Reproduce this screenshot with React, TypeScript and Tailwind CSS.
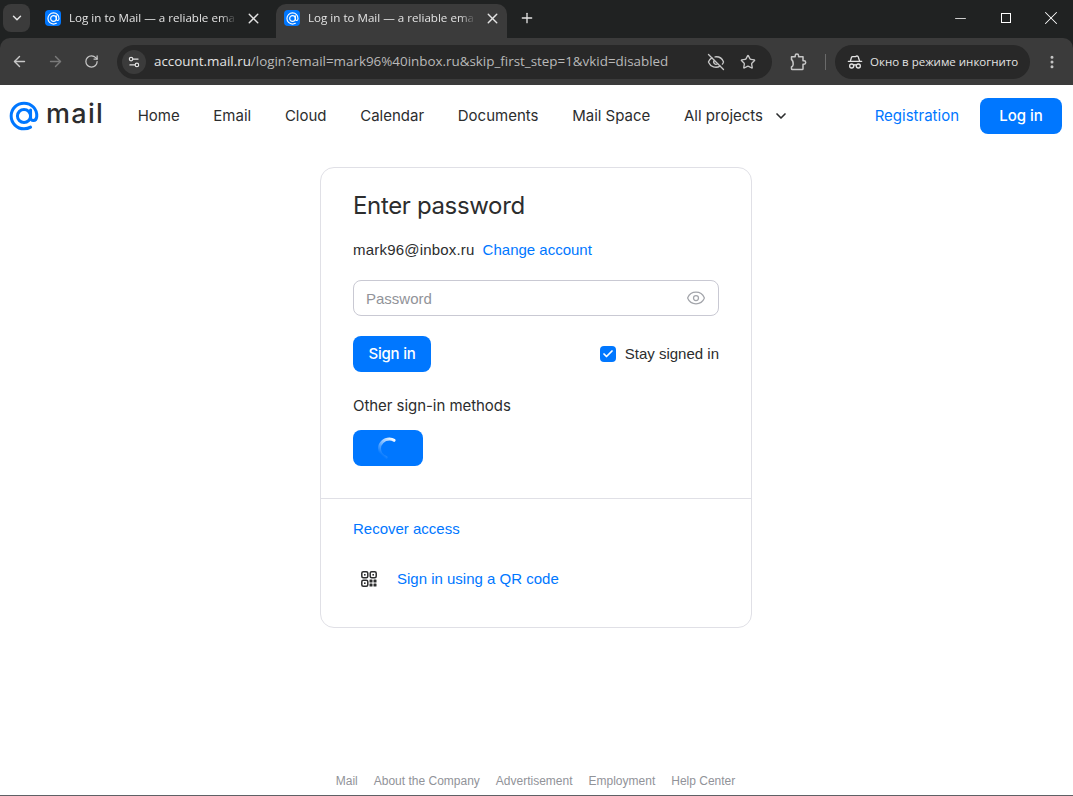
import { ArrowLeft, ArrowRight, ChevronDown, EllipsisVertical, Eye, EyeOff, Minus, Plus, RotateCw, Settings2, Star, X, Check, HatGlasses } from 'lucide-react';

function MailAt({ size, color, weight }: { size: number; color: string; weight: number }) {
    return (
        <svg width={size} height={size} viewBox="0 0 32 32" fill="none">
            <circle cx="16" cy="16" r="7" stroke={color} strokeWidth={weight} />
            <path d="M23 9.500v8c0 4.600 6 4.600 6.600-1C30.100 8.500 24 2.300 16 2.300 8.400 2.300 2.300 8.400 2.300 16S8.400 29.700 16 29.700c2.800 0 5-.6 7-1.800" stroke={color} strokeWidth={weight} strokeLinecap="round" />
        </svg>
    );
}

function Favicon() {
    return (
        <div className="w-[16px] h-[16px] rounded-[4px] bg-[#0077ff] flex items-center justify-center shrink-0">
            <MailAt size={13} color="#ffffff" weight={2.800} />
        </div>
    );
}

function ExtensionIcon() {
    return (
        <svg width="20" height="20" viewBox="0 0 20 20" fill="none" stroke="#c7c7c7" strokeWidth="1.500" strokeLinejoin="round" className="ml-[16px]">
            <path d="M3.500 4.800H7.200V3.800a1.700 1.700 0 0 1 3.400 0v1H15v4h1a1.700 1.700 0 0 1 0 3.400h-1v4.600a.8.8 0 0 1-.8.8H4.300a.8.8 0 0 1-.8-.8v-1.800c1.200-.7 1.700-1.700 1.700-2.800S4.700 8.200 3.500 7.500z" />
        </svg>
    );
}

function Tab({ active }: { active?: boolean }) {
    return (
        <div className={active ? 'w-[231px] h-[34px] rounded-t-[10px] bg-[#3b3b3b] flex items-center pl-[8px] pb-[6px] mt-[4px]' : 'w-[231px] h-[34px] flex items-center pl-[8px] pb-[6px] mt-[4px]'}>
            <Favicon />
            <span className="ml-[8px] w-[168px] overflow-hidden whitespace-nowrap text-[11.600px] text-[#e3e3e3] font-['Open_Sans',sans-serif] [mask-image:linear-gradient(to_right,black_90%,transparent)]">
                Log in to Mail — a reliable ema
            </span>
            <X size={17} strokeWidth={2} className="text-[#e3e3e3] ml-[8px]" />
        </div>
    );
}

function ChromeBar() {
    return (
        <div className="bg-[#202222] font-['Open_Sans',sans-serif]">
            <div className="h-[38px] flex items-start">
                <div className="w-[27px] h-[28px] rounded-[8px] bg-[#3b3b3b] flex items-center justify-center ml-[3px] mt-[4px]">
                    <ChevronDown size={14} strokeWidth={2.500} className="text-[#e3e3e3]" />
                </div>
                <div className="flex ml-[7px] gap-[8px]">
                    <Tab />
                    <Tab active />
                </div>
                <Plus size={16} strokeWidth={2} className="text-[#e3e3e3] ml-[12px] mt-[10px]" />
                <div className="ml-auto flex items-center h-[36px]">
                    <div className="w-[46px] flex justify-center"><Minus size={17} strokeWidth={1.100} className="text-white" /></div>
                    <div className="w-[46px] flex justify-center"><div className="w-[10px] h-[10px] border border-white" /></div>
                    <div className="w-[44px] flex justify-center"><X size={22} strokeWidth={1.100} className="text-white" /></div>
                </div>
            </div>
            <div className="h-[47px] bg-[#3b3b3b] rounded-tl-[10px] rounded-tr-[10px] flex items-center">
                <ArrowLeft size={17} strokeWidth={2} className="text-[#c7c7c7] ml-[11px]" />
                <ArrowRight size={17} strokeWidth={2} className="text-[#7a7a7a] ml-[19px]" />
                <RotateCw size={15} strokeWidth={2} className="text-[#c7c7c7] ml-[20px]" />
                <div className="w-[655px] h-[34px] ml-[18px] rounded-full bg-[#282828] flex items-center pl-[5px] pr-[16px]">
                    <div className="w-[24px] h-[24px] rounded-full bg-[#3b3b3b] flex items-center justify-center">
                        <Settings2 size={14} strokeWidth={2} className="text-[#e3e3e3]" />
                    </div>
                    <span className="ml-[8px] text-[13.400px] text-[#e3e3e3] whitespace-nowrap">
                        account.mail.ru<span className="text-[#b9b9b9]">/login?email=mark96%40inbox.ru&amp;skip_first_step=1&amp;vkid=disabled</span>
                    </span>
                    <EyeOff size={18} strokeWidth={1.800} className="ml-auto text-[#c7c7c7]" />
                    <Star size={16} strokeWidth={2} className="ml-[15px] text-[#c7c7c7]" />
                </div>
                <ExtensionIcon />
                <div className="w-[1px] h-[16px] bg-[#6a6a6a] ml-[17px]" />
                <div className="w-[195px] h-[34px] ml-[9px] rounded-full bg-[#282828] flex items-center pl-[12px]">
                    <HatGlasses size={16} strokeWidth={2} className="text-[#e3e3e3]" />
                    <span className="ml-[7px] text-[11.500px] text-[#e3e3e3] whitespace-nowrap">Окно в режиме инкогнито</span>
                </div>
                <EllipsisVertical size={16} strokeWidth={2.500} className="text-[#c7c7c7] ml-[14px]" />
            </div>
        </div>
    );
}

function Header() {
    const links = ['Home', 'Email', 'Cloud', 'Calendar', 'Documents', 'Mail Space'];

    return (
        <header className="h-[62px] flex items-center pl-[9px] pr-[11px] font-['Inter',sans-serif]">
            <div className="mt-[-1px]">
                <MailAt size={30} color="#0077ff" weight={3.200} />
            </div>
            <span className="ml-[7px] mt-[-5px] text-[27px] leading-none font-medium text-[#2c2d2e] tracking-[1.300px]">mail</span>
            <nav className="flex items-center gap-[33.700px] ml-[33.500px] text-[15px] text-[#2c2d2e]">
                {links.map((link) => (
                    <a key={link}>{link}</a>
                ))}
                <a className="flex items-center gap-[10px]">
                    All projects
                    <ChevronDown size={16} strokeWidth={2.500} />
                </a>
            </nav>
            <a className="ml-auto text-[15px] text-[#0077ff]">Registration</a>
            <button className="ml-[21px] w-[82px] h-[36px] rounded-[8px] bg-[#0077ff] text-white text-[15px] font-medium">Log in</button>
        </header>
    );
}

function QrIcon() {
    return (
        <svg width="16" height="16" viewBox="0 0 16 16" fill="none" className="text-[#2c2d2e]">
            <rect x="0.800" y="0.800" width="6" height="6" rx="1.500" stroke="currentColor" strokeWidth="1.500" />
            <rect x="9.200" y="0.800" width="6" height="6" rx="1.500" stroke="currentColor" strokeWidth="1.500" />
            <rect x="0.800" y="9.200" width="6" height="6" rx="1.500" stroke="currentColor" strokeWidth="1.500" />
            <rect x="3" y="3" width="1.600" height="1.600" fill="currentColor" />
            <rect x="11.400" y="3" width="1.600" height="1.600" fill="currentColor" />
            <rect x="3" y="11.400" width="1.600" height="1.600" fill="currentColor" />
            <rect x="8.500" y="8.500" width="3" height="3" rx="0.500" fill="currentColor" />
            <rect x="12.500" y="8.500" width="3" height="3" rx="0.500" fill="currentColor" />
            <rect x="8.500" y="12.500" width="3" height="3" rx="0.500" fill="currentColor" />
            <rect x="12.500" y="12.500" width="3" height="3" rx="0.500" fill="currentColor" />
        </svg>
    );
}

function Spinner() {
    return (
        <svg width="20" height="22" viewBox="0 0 20 22" fill="none">
            <defs>
                <linearGradient id="spin" x1="1" y1="0" x2="0.300" y2="1">
                    <stop offset="0" stopColor="#ffffff" />
                    <stop offset="1" stopColor="#ffffff" stopOpacity="0" />
                </linearGradient>
            </defs>
            <path d="M17 3.300C15.800 2.500 14 2 12.500 2 6.800 2 2.500 6.300 2.500 11.500c0 4 2.500 7.500 6.500 9" stroke="url(#spin)" strokeWidth="3" strokeLinecap="round" />
        </svg>
    );
}

function LoginCard() {
    return (
        <div className="w-[432px] h-[461px] ml-[320px] mt-[20px] border border-[#e0e0e6] rounded-[14px] bg-white text-[#2c2d2e] font-['Liberation_Sans',sans-serif]">
            <div className="h-[331px] px-[32px] pt-[22px] border-b border-[#e0e0e6]">
                <h1 className="text-[24px] leading-[32px] font-['Inter',sans-serif] tracking-[-0.350px]">Enter password</h1>
                <div className="flex items-center gap-[8px] mt-[18px] text-[15px] leading-[20px]">
                    <span className="tracking-[0.200px]">mark96@inbox.ru</span>
                    <a className="text-[#0077ff]">Change account</a>
                </div>
                <div className="h-[36px] mt-[20px] border border-[#c9c9d3] rounded-[8px] flex items-center pl-[12px] pr-[12px]">
                    <span className="pt-[2px] text-[15px] text-[#919399]">Password</span>
                    <Eye size={20} strokeWidth={1.500} className="ml-auto text-[#a3a5ab]" />
                </div>
                <div className="flex items-center justify-between mt-[20px]">
                    <button className="w-[78px] h-[36px] rounded-[8px] bg-[#0077ff] text-white text-[15px] font-medium font-['Inter',sans-serif] tracking-[-0.200px]">Sign in</button>
                    <div className="flex items-center gap-[9px] text-[15px]">
                        <div className="w-[16px] h-[16px] rounded-[4px] bg-[#0077ff] flex items-center justify-center">
                            <Check size={12} strokeWidth={3.500} className="text-white" />
                        </div>
                        <span>Stay signed in</span>
                    </div>
                </div>
                <p className="mt-[24px] text-[15px] leading-[20px] font-['Inter',sans-serif] tracking-[-0.050px]">Other sign-in methods</p>
                <div className="w-[70px] h-[36px] mt-[14px] rounded-[8px] bg-[#0077ff] flex items-center pl-[24px]">
                    <Spinner />
                </div>
            </div>
            <div className="px-[32px] pt-[20px] text-[15px] leading-[20px] text-[#0077ff]">
                <a>Recover access</a>
                <div className="flex items-center mt-[30px] pl-[8px]">
                    <QrIcon />
                    <a className="ml-[20px]">Sign in using a QR code</a>
                </div>
            </div>
        </div>
    );
}

function Footer() {
    const links = ['Mail', 'About the Company', 'Advertisement', 'Employment', 'Help Center'];

    return (
        <footer className="mt-auto h-[31px] pt-[2px] pr-[2px] border-b border-[#5f6065] flex items-center justify-center gap-[16px] text-[12px] text-[#919399] font-['Liberation_Sans',sans-serif]">
            {links.map((link) => (
                <a key={link}>{link}</a>
            ))}
        </footer>
    );
}

export default function App() {
    return (
        <div className="w-[1073px] h-[796px] flex flex-col bg-white overflow-hidden">
            <ChromeBar />
            <Header />
            <LoginCard />
            <Footer />
        </div>
    );
}
